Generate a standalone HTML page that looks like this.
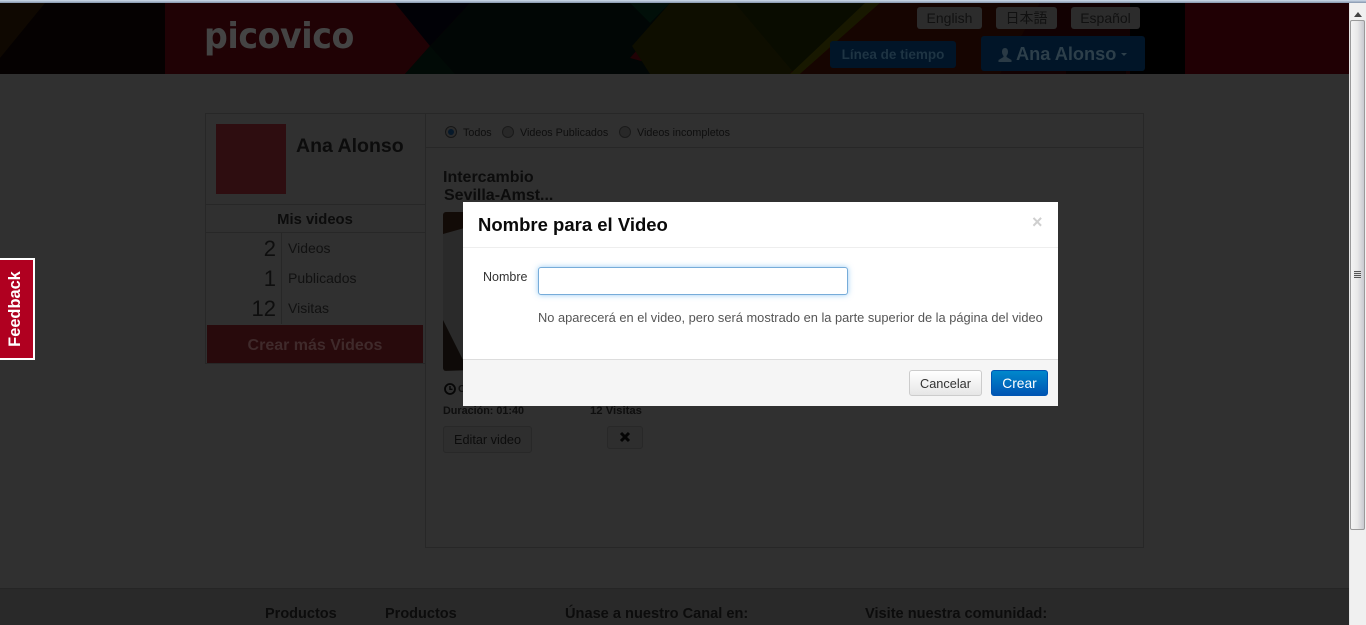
<!DOCTYPE html>
<html><head><meta charset="utf-8"><style>
html,body{margin:0;padding:0;width:1366px;height:625px;overflow:hidden;background:#303030}
body{font-family:"Liberation Sans","Noto Sans CJK JP",sans-serif;position:relative}
.a{position:absolute;white-space:nowrap}
.b{font-weight:bold}
.line{position:absolute;background:#272727}
</style></head><body>
<div class="a" style="left:0;top:0;width:1349px;height:3px;background:linear-gradient(#c4d2e2,#8090a8)"></div>
<svg class="a" style="left:0;top:3px" width="1349" height="71" viewBox="0 0 1349 71">
<rect width="1349" height="71" fill="#050101"/>
<polygon points="0,0 45,0 0,55" fill="#0f0801"/>
<rect x="165" width="1020" height="71" fill="#200205"/>
<polygon points="395,0 470,0 430,43 395,0" fill="#010106"/>
<polygon points="470,0 620,0 678,0 630,55 690,71 405,71 430,43" fill="#010605"/>
<polygon points="430,43 405,71 455,71" fill="#010a06"/>
<polygon points="630,0 670,0 650,20" fill="#010f09"/>
<polygon points="670,0 840,0 790,71 650,71 632,43" fill="#0e0e00"/>
<polygon points="735,0 875,0 795,71" fill="#090c00"/>
<polygon points="865,0 880,0 800,71 790,71" fill="#181800"/>
<polygon points="880,0 1185,0 1185,71 800,71" fill="#160501"/>
<polygon points="1040,0 1185,0 1185,71 1000,71" fill="#120102"/>
<rect x="1130" width="55" height="71" fill="#000"/>
<rect x="1066" y="50" width="60" height="21" fill="#070101"/>
<rect x="1185" width="164" height="71" fill="#200004"/>
</svg>
<div class="a b" style="left:204px;top:14px;font-size:36px;line-height:46px;color:#444;letter-spacing:-.5px;font-family:'DejaVu Sans',sans-serif;transform:scaleX(.925);transform-origin:0 0">picovico</div>

<div class="a" style="left:917px;top:7px;width:65px;height:22px;background:#2c2c2c;border-radius:3px;color:#111;font-size:14px;line-height:22px;text-align:center">English</div>
<div class="a" style="left:996px;top:7px;width:61px;height:22px;background:#2c2c2c;border-radius:3px;color:#111;font-size:14px;line-height:22px;text-align:center">日本語</div>
<div class="a" style="left:1071px;top:7px;width:69px;height:22px;background:#2c2c2c;border-radius:3px;color:#111;font-size:14px;line-height:22px;text-align:center">Español</div>
<div class="a b" style="left:830px;top:41px;width:126px;height:27px;background:#011528;border-radius:3px;color:#1e3443;font-size:13.500px;line-height:27px;text-align:center">Línea de tiempo</div>
<div class="a" style="left:981px;top:36px;width:164px;height:35px;background:#011528;border-radius:3px"></div>
<svg class="a" style="left:997px;top:47px" width="16" height="16" viewBox="0 0 16 16"><path d="M8 1C5.800 1 5 2.800 5 5c0 2 1 3 1.500 4v1L1.500 13v2h13v-2l-5-3V9c.5-1 1.500-2 1.500-4 0-2.200-.8-4-3-4z" fill="#2a3a45"/></svg>
<div class="a b" style="left:1016px;top:42px;font-size:18.200px;line-height:24px;color:#2d3f4a">Ana Alonso</div>
<div class="a" style="left:1121px;top:53px;border:3.500px solid transparent;border-top-color:#2d3f4a;border-bottom:0"></div>

<!-- left card -->
<div class="a" style="left:205px;top:113px;width:220px;height:251px;box-sizing:border-box;border:1px solid #272727;border-right:0;background:#303030"></div>
<div class="a" style="left:216px;top:124px;width:70px;height:70px;background:#2e0d10"></div>
<div class="a b" style="left:296px;top:133px;font-size:19.500px;line-height:26px;color:#0c0c0c">Ana Alonso</div>
<div class="line" style="left:206px;top:204px;width:219px;height:1px"></div>
<div class="a b" style="left:206px;top:212px;width:218px;text-align:center;font-size:14.800px;line-height:17px;color:#0c0c0c">Mis videos</div>
<div class="line" style="left:206px;top:232px;width:219px;height:1px"></div>
<div class="line" style="left:281px;top:233px;width:1px;height:91px"></div>
<div class="a" style="left:206px;width:70px;top:235px;text-align:right;font-size:22px;line-height:28px;color:#0e0e0e">2</div>
<div class="a" style="left:206px;width:70px;top:265px;text-align:right;font-size:22px;line-height:28px;color:#0e0e0e">1</div>
<div class="a" style="left:206px;width:70px;top:295px;text-align:right;font-size:22px;line-height:28px;color:#0e0e0e">12</div>
<div class="a" style="left:288px;top:240px;font-size:14px;line-height:17px;color:#111">Videos</div>
<div class="a" style="left:288px;top:270px;font-size:14px;line-height:17px;color:#111">Publicados</div>
<div class="a" style="left:288px;top:300px;font-size:14px;line-height:17px;color:#111">Visitas</div>
<div class="a b" style="left:207px;top:325px;width:216px;height:38px;background:#280a0c;text-align:center;font-size:16px;line-height:42px;color:#3f2a2b">Crear más Videos</div>

<!-- right panel -->
<div class="a" style="left:425px;top:113px;width:719px;height:435px;box-sizing:border-box;border:1px solid #272727;background:#303030"></div>
<div class="line" style="left:426px;top:147px;width:717px;height:1px"></div>
<div class="a" style="left:445px;top:126px;width:10px;height:10px;border-radius:50%;border:1px solid #161616;background:#2c2c2c"></div>
<div class="a" style="left:448px;top:129px;width:6px;height:6px;border-radius:50%;background:#07192a"></div>
<div class="a" style="left:502px;top:126px;width:10px;height:10px;border-radius:50%;border:1px solid #1a1a1a;background:#282828"></div>
<div class="a" style="left:619px;top:126px;width:10px;height:10px;border-radius:50%;border:1px solid #1a1a1a;background:#282828"></div>
<div class="a" style="left:463px;top:127px;font-size:10.750px;line-height:13px;color:#0e0e0e">Todos</div>
<div class="a" style="left:520px;top:127px;font-size:10.750px;line-height:13px;color:#0e0e0e">Videos Publicados</div>
<div class="a" style="left:637px;top:127px;font-size:10.750px;line-height:13px;color:#0e0e0e">Videos incompletos</div>
<div class="a b" style="left:443px;top:169px;font-size:16px;line-height:18px;color:#0c0c0c">Intercambio<br><span style="margin-left:1px">Sevilla-Amst...</span></div>
<div class="a" style="left:443px;top:212px;width:25px;height:159px;background:#2a2a2a;border-radius:3px 0 0 3px;overflow:hidden">
<svg width="25" height="159"><polygon points="0,0 25,0 25,15 0,22" fill="#120b07"/><polygon points="0,108 25,158 0,159" fill="#0e0a08"/></svg></div>
<svg class="a" style="left:444px;top:383px" width="12" height="12" viewBox="0 0 12 12"><circle cx="6" cy="6" r="5" fill="none" stroke="#060606" stroke-width="1.800"/><path d="M6 3v3.300h2.500" fill="none" stroke="#060606" stroke-width="1.400"/></svg>
<div class="a b" style="left:458px;top:383px;font-size:10.500px;line-height:13px;color:#111">Creado</div>
<div class="a b" style="left:443px;top:405px;font-size:10.800px;line-height:13px;color:#0e0e0e">Duración: 01:40</div>
<div class="a b" style="left:590px;top:405px;font-size:11.300px;line-height:13px;color:#0e0e0e">12 Visitas</div>
<div class="a" style="left:443px;top:426px;width:89px;height:27px;box-sizing:border-box;border:1px solid #282828;border-radius:3px;background:#2e2e2e;text-align:center;font-size:12.700px;line-height:26px;color:#0c0c0c">Editar video</div>
<div class="a" style="left:607px;top:426px;width:36px;height:23px;box-sizing:border-box;border:1px solid #282828;border-radius:3px;background:#2e2e2e"></div>
<svg class="a" style="left:619px;top:431px" width="12" height="12" viewBox="0 0 12 12"><path d="M2 2l8 8M10 2l-8 8" stroke="#050505" stroke-width="3"/></svg>

<!-- footer -->
<div class="a" style="left:0;top:588px;width:1349px;height:37px;background:#292929;border-top:1px solid #252525"></div>
<div class="a b" style="left:265px;top:606px;font-size:14.500px;line-height:17px;color:#0c0c0c">Productos</div>
<div class="a b" style="left:385px;top:606px;font-size:14.500px;line-height:17px;color:#0c0c0c">Productos</div>
<div class="a b" style="left:565px;top:606px;font-size:14.600px;line-height:17px;color:#0c0c0c">Únase a nuestro Canal en:</div>
<div class="a b" style="left:865px;top:606px;font-size:14.600px;line-height:17px;color:#0c0c0c">Visite nuestra comunidad:</div>

<!-- feedback -->
<div class="a" style="left:-3px;top:258px;width:38px;height:102px;box-sizing:border-box;border:2px solid #fff;background:#b00020"></div>
<div class="a b" style="left:-25px;top:300px;width:80px;height:18px;transform:rotate(-90deg);text-align:center;font-size:16.400px;line-height:18px;color:#fff">Feedback</div>

<!-- modal -->
<div class="a" style="left:463px;top:202px;width:595px;height:204px;background:#fff;overflow:hidden">
<div class="a b" style="left:15px;top:12px;font-size:18.500px;line-height:22px;color:#0a0a0a">Nombre para el Video</div>
<div class="a b" style="left:569px;top:10px;font-size:18px;line-height:20px;color:#cfcfcf">×</div>
<div class="a" style="left:0;top:45px;width:595px;height:1px;background:#eee"></div>
<div class="a" style="left:20px;top:68px;font-size:12.500px;line-height:15px;color:#333">Nombre</div>
<div class="a" style="left:75px;top:65px;width:310px;height:28px;box-sizing:border-box;border:1px solid #77acd9;border-radius:3px;background:#fff;box-shadow:0 0 6px rgba(82,168,236,.6)"></div>
<div class="a" style="left:75px;top:108px;font-size:12.850px;line-height:16px;color:#555">No aparecerá en el video, pero será mostrado en la parte superior de la página del video</div>
<div class="a" style="left:0;top:157px;width:595px;height:47px;background:#f5f5f5;border-top:1px solid #ddd"></div>
<div class="a" style="left:446px;top:168px;width:73px;height:26px;box-sizing:border-box;border:1px solid #ccc;border-radius:3px;background:linear-gradient(#fff,#e6e6e6);text-align:center;font-size:12.750px;line-height:25px;color:#333">Cancelar</div>
<div class="a" style="left:528px;top:168px;width:57px;height:26px;box-sizing:border-box;border:1px solid #0055b3;border-radius:3px;background:linear-gradient(#0088cc,#0055b3);text-align:center;font-size:13.800px;line-height:25px;color:#fff">Crear</div>
</div>

<!-- scrollbar -->
<div class="a" style="left:1349px;top:3px;width:17px;height:622px;background:#f0f0f0;border-left:1px solid #e4e4e4;box-sizing:border-box"></div>
<div class="a" style="left:0;top:0;width:1366px;height:3px;background:linear-gradient(#cfdcea,#8595ad)"></div>
<div class="a" style="left:1354px;top:12px;border:4px solid transparent;border-bottom:5px solid #444;border-top:0"></div>
<div class="a" style="left:1350px;top:20px;width:15px;height:510px;box-sizing:border-box;border:1px solid #9a9a9a;border-radius:2px;background:linear-gradient(90deg,#f4f4f4,#e8e8e8 50%,#c9c9d0)"></div>
<div class="a" style="left:1354px;top:271px;width:7px;height:7px;background:repeating-linear-gradient(#555 0 1px,#ddd 1px 2px)"></div>
</body></html>
